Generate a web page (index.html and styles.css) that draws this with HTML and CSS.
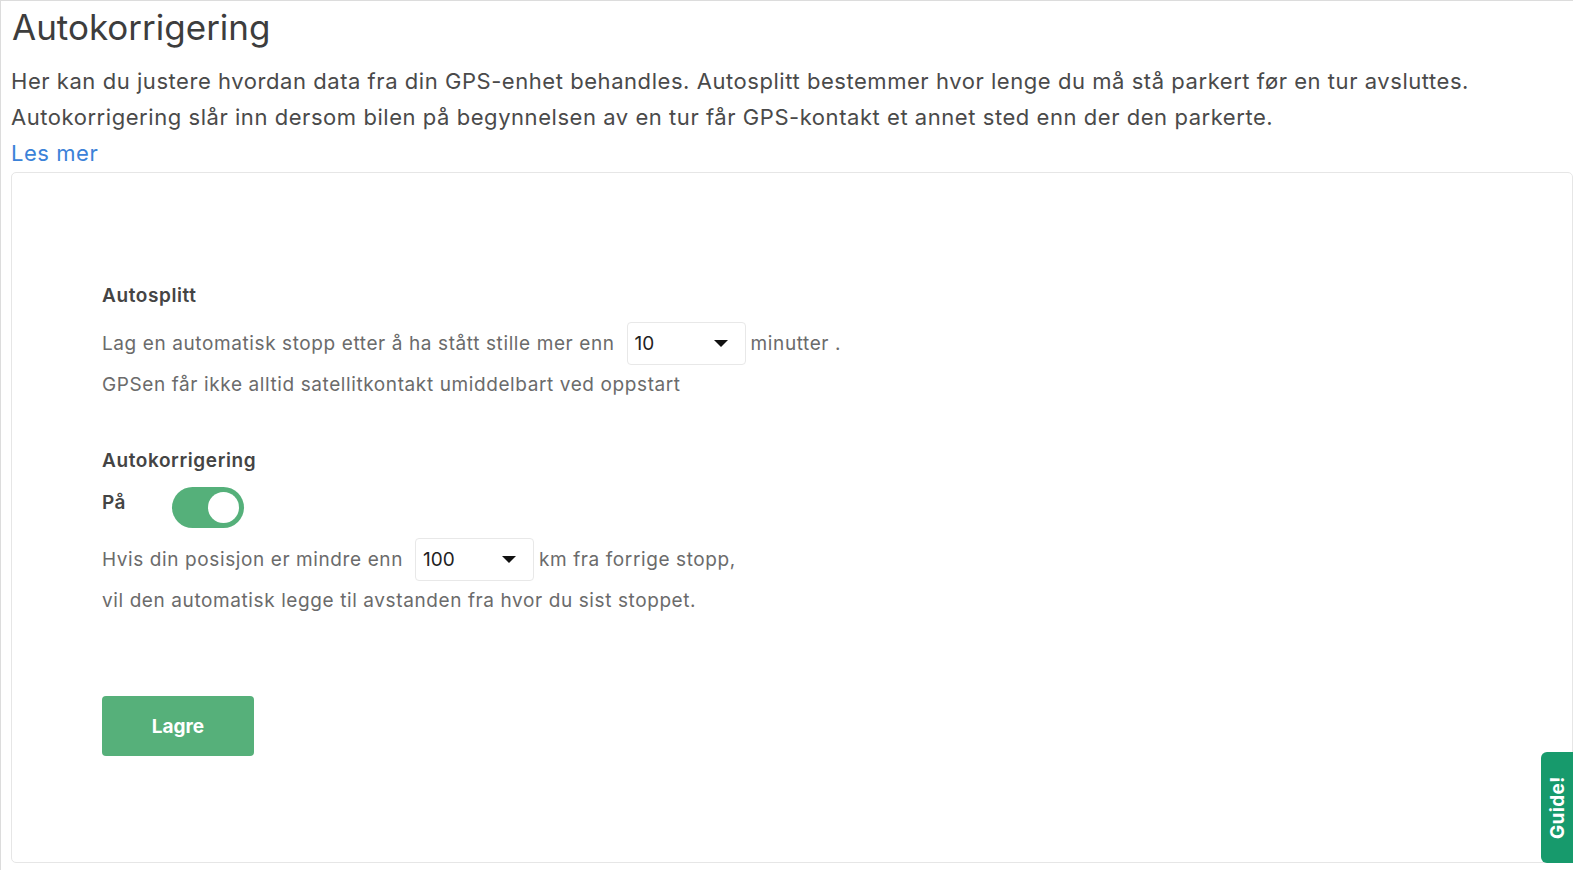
FILE: index.html
```html
<!DOCTYPE html>
<html lang="no">
<head>
    <meta charset="UTF-8">
    <meta name="viewport" content="width=device-width, initial-scale=1.0">
    <title>Autokorrigering</title>
    <link rel="stylesheet" href="styles.css">
</head>
<body>
    <div class="page">
        <h1>Autokorrigering</h1>
        <p class="intro">Her kan du justere hvordan data fra din GPS-enhet behandles. Autosplitt bestemmer hvor lenge du må stå parkert før en tur avsluttes.<br>
        Autokorrigering slår inn dersom bilen på begynnelsen av en tur får GPS-kontakt et annet sted enn der den parkerte.</p>
        <a class="read-more" href="#">Les mer</a>

        <div class="settings-card">
            <div class="section">
                <h2>Autosplitt</h2>
                <div class="line">
                    Lag en automatisk stopp etter å ha stått stille mer enn
                    <div class="select-box">
                        <span>10</span>
                        <span class="caret"></span>
                    </div>
                    minutter .
                </div>
                <div class="line">GPSen får ikke alltid satellitkontakt umiddelbart ved oppstart</div>
            </div>

            <div class="section">
                <h2>Autokorrigering</h2>
                <div class="toggle-row">
                    <span class="toggle-label">På</span>
                    <div class="toggle"><span class="knob"></span></div>
                </div>
                <div class="line">
                    Hvis din posisjon er mindre enn
                    <div class="select-box">
                        <span>100</span>
                        <span class="caret"></span>
                    </div>
                    km fra forrige stopp,
                </div>
                <div class="line">vil den automatisk legge til avstanden fra hvor du sist stoppet.</div>
            </div>

            <button class="save-button">Lagre</button>
        </div>
    </div>

    <div class="guide-tab">Guide!</div>
</body>
</html>
```

FILE: styles.css
```css
body {
    margin: 0;
    font-family: 'Inter', 'Noto Sans', sans-serif;
    color: #444;
    background-color: white;
}

.page {
    height: 870px;
    box-sizing: border-box;
    border: 1px solid #dcdcdc;
    border-right: none;
    border-bottom: none;
    padding: 0 0 7px 10px;
    display: flex;
    flex-direction: column;
}

h1 {
    font-weight: 400;
    font-size: 35px;
    color: #3d3d3d;
    margin: 5px 0 15px 1px;
    line-height: 42px;
}

.intro {
    font-size: 22px;
    line-height: 36px;
    letter-spacing: 0.55px;
    color: #4a4a4a;
    margin: 0;
}

.read-more {
    font-size: 22px;
    line-height: 36px;
    color: #3b82d8;
    text-decoration: none;
    letter-spacing: 0.55px;
    align-self: flex-start;
}

.settings-card {
    flex: 1;
    border: 1px solid #e6e6e6;
    border-radius: 5px;
    margin-top: 1px;
    padding: 111px 90px 0 90px;
}

.section {
    margin-bottom: 46px;
}

h2 {
    font-size: 19px;
    font-weight: 600;
    color: #444;
    margin: 0 0 15px 0;
    letter-spacing: 0.6px;
}

.line {
    display: flex;
    align-items: center;
    font-size: 19px;
    color: #6b6b6b;
    letter-spacing: 0.6px;
    min-height: 38px;
}

.select-box {
    width: 119px;
    height: 43px;
    box-sizing: border-box;
    border: 1px solid #e8e8e8;
    border-radius: 4px;
    display: flex;
    align-items: center;
    justify-content: space-between;
    padding: 0 17px 0 7px;
    margin: 0 5px 0 12px;
    color: #222;
    font-size: 19px;
    letter-spacing: 0;
}

.caret {
    width: 0;
    height: 0;
    border-left: 7px solid transparent;
    border-right: 7px solid transparent;
    border-top: 7px solid #111;
}

.toggle-row {
    display: flex;
    align-items: center;
    gap: 46px;
    margin-bottom: 10px;
}

.toggle-label {
    font-size: 19px;
    font-weight: 600;
    color: #444;
    margin-top: -10px;
    letter-spacing: 0.4px;
}

.toggle {
    width: 72px;
    height: 41px;
    border-radius: 21px;
    background-color: #55b07a;
    display: flex;
    align-items: center;
    justify-content: flex-end;
    padding: 0 5px;
    box-sizing: border-box;
}

.knob {
    width: 31px;
    height: 31px;
    border-radius: 50%;
    background-color: white;
}

.save-button {
    margin-top: 31px;
    width: 152px;
    height: 60px;
    border: none;
    border-radius: 4px;
    background-color: #56b07a;
    color: white;
    font-family: 'Inter', sans-serif;
    font-size: 19px;
    font-weight: 700;
    cursor: pointer;
}

.guide-tab {
    position: absolute;
    left: 1541px;
    top: 752px;
    width: 32px;
    height: 111px;
    background-color: #179a6c;
    color: white;
    font-size: 19px;
    font-weight: 700;
    letter-spacing: 0.3px;
    writing-mode: vertical-rl;
    transform: rotate(180deg);
    border-radius: 0 6px 6px 0;
    display: flex;
    align-items: center;
    justify-content: center;
    box-sizing: border-box;
}
```
